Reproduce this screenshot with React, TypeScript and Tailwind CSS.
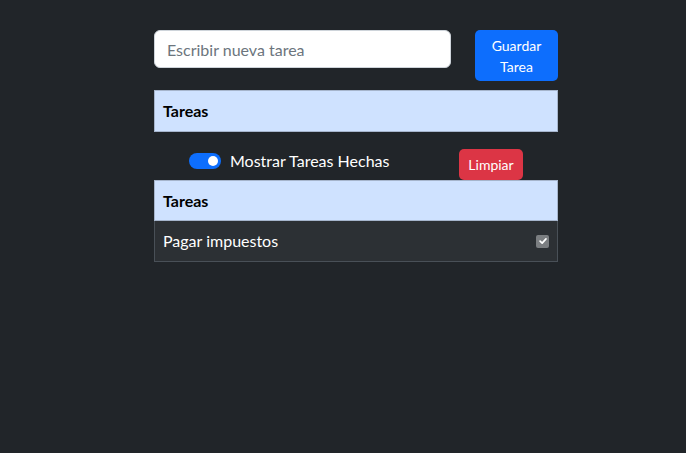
import React from "react";

const App = () => {
  return (
    <div
      className="min-h-[453px] w-full bg-[#212529] text-white"
      style={{ fontFamily: 'Lato, "Noto Sans", sans-serif' }}
    >
      <div className="ml-[154px] w-[404px] pt-[30px]">
        <div className="flex items-start justify-between">
          <input
            type="text"
            placeholder="Escribir nueva tarea"
            className="h-[38px] w-[297px] rounded-[6px] border border-[#ced4da] bg-white px-3 text-[16px] text-[#212529] placeholder:text-[#6c757d] outline-none"
          />
          <button className="h-[51px] w-[83px] rounded-[5px] bg-[#0d6efd] text-[14px] leading-[21px] text-white">
            Guardar
            <br />
            Tarea
          </button>
        </div>

        <div className="mt-[9px] flex h-[42px] items-center border border-[#a6b5cc] bg-[#cfe2ff] px-2 text-[16px] font-bold text-black">
          Tareas
        </div>

        <div className="flex items-start">
          <div className="ml-[35px] mt-[20px] flex items-center">
            <span className="relative inline-block h-[16px] w-[32px] rounded-full bg-[#0d6efd]">
              <span className="absolute right-[3px] top-[3px] h-[10px] w-[10px] rounded-full bg-white" />
            </span>
            <span className="ml-[9px] text-[16px] leading-[17px]">Mostrar Tareas Hechas</span>
          </div>
          <button className="ml-auto mr-[35px] mt-[17px] h-[31px] w-[64px] rounded-[5px] bg-[#dc3545] text-[14px] leading-[21px] text-white">
            Limpiar
          </button>
        </div>

        <div>
          <div className="flex h-[41px] items-center border border-[#a6b5cc] bg-[#cfe2ff] px-2 text-[16px] font-bold text-black">
            Tareas
          </div>
          <div className="flex h-[41px] items-center justify-between border border-t-0 border-[#495057] bg-[#2c3034] px-2 text-[16px]">
            <span>Pagar impuestos</span>
            <span className="flex h-[13px] w-[13px] items-center justify-center rounded-[2px] bg-[#7b7e81]">
              <svg viewBox="0 0 12 12" className="h-[10px] w-[10px]" fill="none">
                <path d="M2.5 6.2 5 8.6 9.6 3.4" stroke="white" strokeWidth="2" strokeLinecap="round" strokeLinejoin="round" />
              </svg>
            </span>
          </div>
        </div>
      </div>
    </div>
  );
};

export default App;
